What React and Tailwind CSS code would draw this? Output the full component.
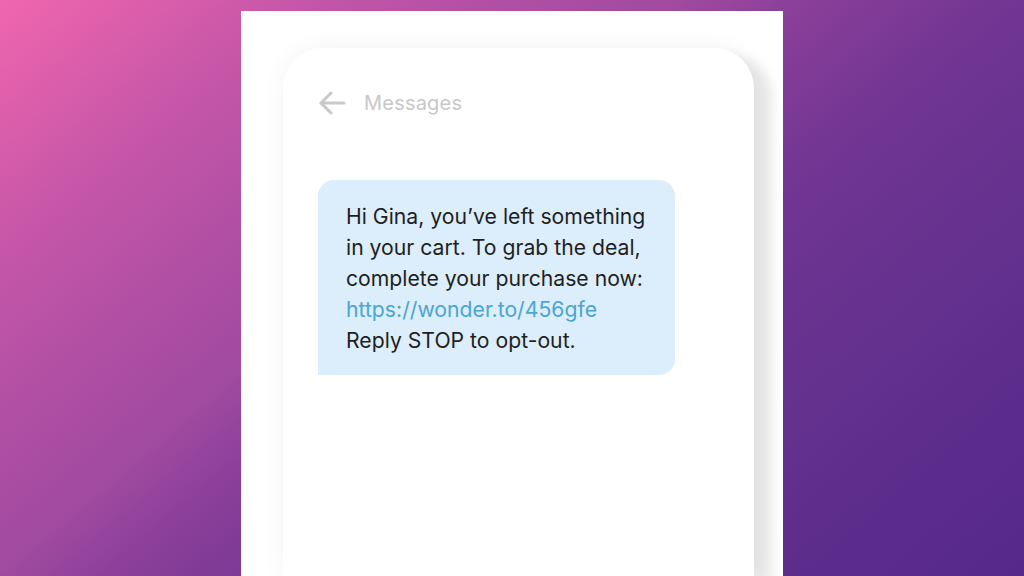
export default function App() {
  return (
    <div className="w-full h-[576px] overflow-hidden flex justify-center bg-[linear-gradient(140deg,#f066ae_0%,#c556a8_18%,#b04fa4_30%,#a04aa0_40%,#8a3f9a_47%,#703592_60%,#62308e_78%,#55288a_100%)] font-['Inter',sans-serif]">
      <div className="mt-[11px] w-[542px] h-[565px] bg-white pl-[42px] pr-[29px] pt-[37px]">
        <div className="h-full bg-white rounded-t-[40px] shadow-[0_0_24px_rgba(0,0,0,0.05),18px_8px_12px_rgba(0,0,0,0.09)] pl-[35px] pr-[36px] pt-[40px]">
          <div className="flex items-center gap-[18px] h-[30px]">
            <svg width="28" height="24" viewBox="0 0 28 24" fill="none" stroke="#c9c9c9" strokeWidth="3" strokeLinecap="round" strokeLinejoin="round">
              <path d="M26 12H3" />
              <path d="M13 2L3 12l10 10" />
            </svg>
            <span className="text-[20px] text-[#c8c8c8] tracking-[0.2px]">Messages</span>
          </div>
          <div className="mt-[62px] w-[357px] bg-[#dcedfb] rounded-[16px] rounded-bl-none pl-[28px] pr-3 pt-[21px] pb-[19px] text-[21.2px] leading-[31px] text-[#1f1f1f]">
            <p>Hi Gina, you’ve left something</p>
            <p>in your cart. To grab the deal,</p>
            <p>complete your purchase now:</p>
            <p className="text-[#4aa6d2]">https://wonder.to/456gfe</p>
            <p>Reply STOP to opt-out.</p>
          </div>
        </div>
      </div>
    </div>
  );
}
